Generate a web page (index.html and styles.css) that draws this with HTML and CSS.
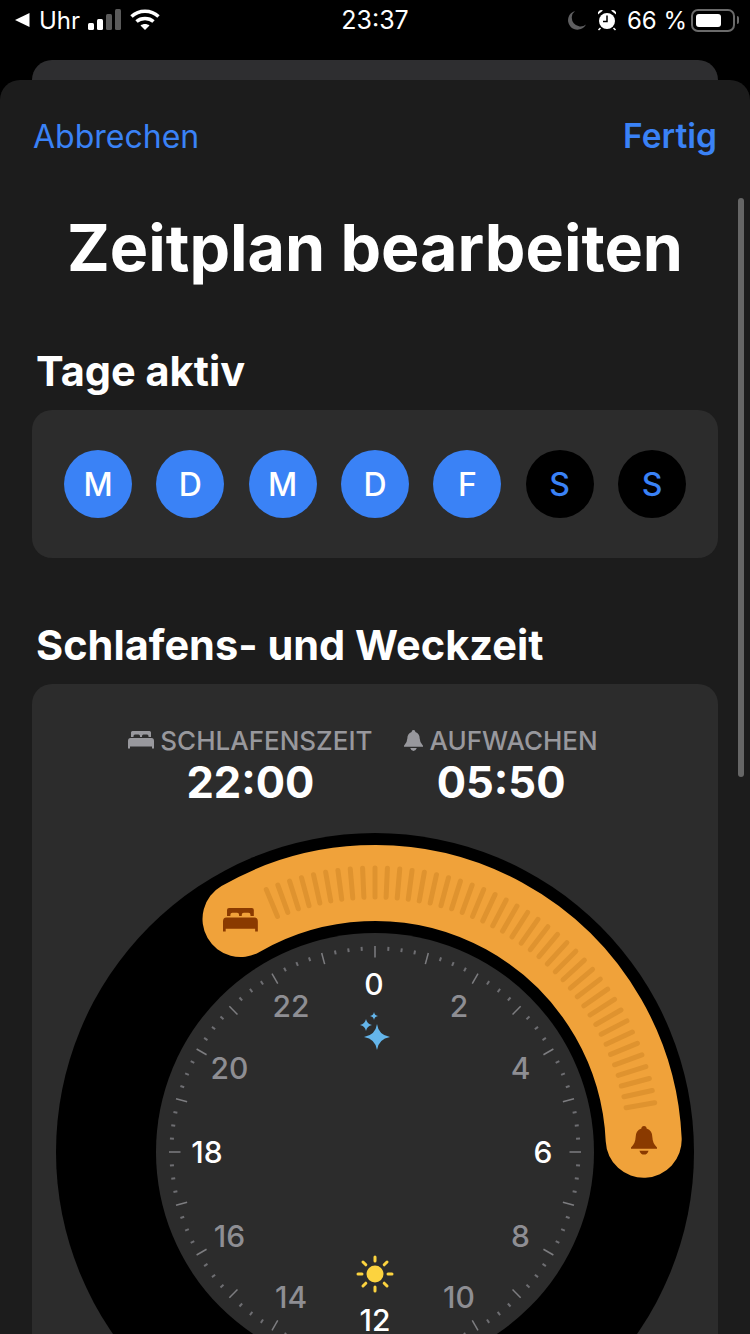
FILE: index.html
```html
<!DOCTYPE html>
<html lang="de">
<head>
    <meta charset="UTF-8">
    <meta name="viewport" content="width=device-width, initial-scale=1.0">
    <title>Zeitplan bearbeiten</title>
    <link rel="stylesheet" href="styles.css">
</head>
<body>
    <div class="screen">
        <div class="statusbar">
            <div class="status-left">
                <svg class="back-arrow" width="16" height="16" viewBox="0 0 16 16"><path d="M15.500 1V15L1 8Z"/></svg>
                <span>Uhr</span>
                <svg class="signal" width="34" height="22" viewBox="0 0 34 22">
                    <rect x="0" y="14" width="6" height="7" rx="1.500" fill="#fff"/>
                    <rect x="9" y="10" width="6" height="11" rx="1.500" fill="#fff"/>
                    <rect x="18" y="5" width="6" height="16" rx="1.500" fill="#5a5a5a"/>
                    <rect x="27" y="0" width="6" height="21" rx="1.500" fill="#5a5a5a"/>
                </svg>
                <svg class="wifi" width="30" height="22" viewBox="0 0 30 22">
                    <path d="M1.500 7.500C9 .5 21 .5 28.500 7.500" />
                    <path d="M6.500 12.500C11 8.500 19 8.500 23.500 12.500" />
                    <path class="wifi-dot" d="M10.500 16.500C13 14.500 17 14.500 19.500 16.500L15 21Z" />
                </svg>
            </div>
            <div class="status-time">23:37</div>
            <div class="status-right">
                <svg class="moon" width="20" height="20" viewBox="0 0 20 20"><path d="M8 1A9.500 9.500 0 1 0 19 14.500 8.500 8.500 0 0 1 8 1Z"/></svg>
                <svg class="alarm" width="20" height="22" viewBox="0 0 20 22">
                    <circle cx="10" cy="12" r="8" fill="#fff"/>
                    <path d="M10 6.500V12.500H6" fill="none" stroke="#000" stroke-width="1.500"/>
                    <path d="M1 5.500A3.500 3.500 0 0 1 6 1.500ZM19 5.500A3.500 3.500 0 0 0 14 1.500Z" fill="#fff"/>
                    <path d="M3.500 19L1.500 21M16.500 19L18.500 21" stroke="#fff" stroke-width="1.500"/>
                </svg>
                <span class="battery-text">66 %</span>
                <div class="battery"><div class="battery-level"></div></div>
                <div class="battery-cap"></div>
            </div>
        </div>

        <div class="back-card"></div>

        <div class="sheet">
            <div class="nav">
                <span class="nav-cancel">Abbrechen</span>
                <span class="nav-done">Fertig</span>
            </div>
            <h1>Zeitplan bearbeiten</h1>

            <h2 class="section-days">Tage aktiv</h2>
            <div class="card days">
                <div class="day on">M</div>
                <div class="day on">D</div>
                <div class="day on">M</div>
                <div class="day on">D</div>
                <div class="day on">F</div>
                <div class="day">S</div>
                <div class="day">S</div>
            </div>

            <h2 class="section-sleep">Schlafens- und Weckzeit</h2>
            <div class="card sleep">
                <div class="times">
                    <div class="time-col">
                        <div class="time-label">
                            <svg width="26" height="18" viewBox="0 0 26 18"><use href="#bed"/></svg>
                            SCHLAFENSZEIT
                        </div>
                        <div class="time-value">22:00</div>
                    </div>
                    <div class="time-col">
                        <div class="time-label">
                            <svg width="19" height="21" viewBox="0 0 20 22"><use href="#bell"/></svg>
                            AUFWACHEN
                        </div>
                        <div class="time-value">05:50</div>
                    </div>
                </div>

                <svg class="clock" id="clock" width="638" height="638" viewBox="-319 -319 638 638">
                    <defs>
                        <g id="bed" fill="currentColor">
                            <path d="M3 1.500Q3 0 4.500 0H21.500Q23 0 23 1.500V6H20.500V5Q20.500 3.500 19 3.500H15.500Q14 3.500 14 5V6H12V5Q12 3.500 10.500 3.500H7Q5.500 3.500 5.500 5V6H3Z"/>
                            <path d="M2.500 7H23.500Q26 7 26 10V17.500H24V15.500H2V17.500H0V10Q0 7 2.500 7Z"/>
                        </g>
                        <g id="bell" fill="currentColor">
                            <path d="M10 0Q12 0 12 2Q16.500 3.500 16.500 9Q16.500 13 20 16.500V17.500H0V16.500Q3.500 13 3.500 9Q3.500 3.500 8 2Q8 0 10 0Z"/>
                            <path d="M6.500 19H13.500Q12.500 22 10 22Q7.500 22 6.500 19Z"/>
                        </g>
                    </defs>
                    <circle r="319" fill="#000"/>
                    <circle r="219" fill="#2c2c2c"/>
                    <g id="dialTicks"></g>
                    <path d="M-134.500 -233A269 269 0 0 1 268.700 -12.200" fill="none" stroke="#f0a23a" stroke-width="76" stroke-linecap="round"/>
                    <g id="bandTicks"></g>
                    <use href="#bed" transform="translate(-152 -244) scale(1.340)" class="band-icon"/>
                    <use href="#bell" transform="translate(256 -26) scale(1.300)" class="band-icon"/>
                    <g id="hours" class="hours"></g>
                    <g fill="#64b5ea">
                        <path d="M2 -128Q3.500 -117 15 -115Q3.500 -113 2 -102Q.5 -113 -11 -115Q.5 -117 2 -128Z"/>
                        <path d="M-9 -133Q-8 -128 -3 -127Q-8 -126 -9 -121Q-10 -126 -15 -127Q-10 -128 -9 -133Z"/>
                        <path d="M-1 -140Q-.5 -136.500 3 -136Q-.5 -135.500 -1 -132Q-1.500 -135.500 -5 -136Q-1.500 -136.500 -1 -140Z"/>
                    </g>
                    <g class="sun">
                        <circle cy="122" r="8.500" fill="#fcd33f"/>
                        <g id="sunRays"></g>
                    </g>
                </svg>
            </div>
        </div>

        <div class="scroll-thumb"></div>
    </div>

    <script>
        const NS = "http://www.w3.org/2000/svg";

        function addLine(parent, angle, r1, r2, cls, cy) {
            const a = angle * Math.PI / 180;
            const line = document.createElementNS(NS, "line");
            line.setAttribute("x1", (Math.sin(a) * r1).toFixed(2));
            line.setAttribute("y1", ((cy || 0) - Math.cos(a) * r1).toFixed(2));
            line.setAttribute("x2", (Math.sin(a) * r2).toFixed(2));
            line.setAttribute("y2", ((cy || 0) - Math.cos(a) * r2).toFixed(2));
            line.setAttribute("class", cls);
            parent.appendChild(line);
        }

        // Skala: alle 15 Minuten ein Strich, jede Stunde ein langer
        const dial = document.getElementById("dialTicks");
        for (let i = 0; i < 96; i++) {
            if (i % 4 === 0) addLine(dial, i * 3.75, 206, 194.500, "tick-long");
            else addLine(dial, i * 3.75, 205.500, 201.500, "tick-short");
        }

        const band = document.getElementById("bandTicks");
        for (let deg = -22.5; deg <= 80; deg += 2.5) {
            addLine(band, deg, 284, 255, "band-tick");
        }

        // Stundenzahlen
        const hours = document.getElementById("hours");
        for (let h = 0; h < 24; h += 2) {
            const a = h * 15 * Math.PI / 180;
            const t = document.createElementNS(NS, "text");
            t.setAttribute("x", (Math.sin(a) * 168 - (h === 0 ? 1 : 0)).toFixed(1));
            t.setAttribute("y", (-Math.cos(a) * 168 + 10.5).toFixed(1));
            t.setAttribute("class", h % 6 === 0 ? "hour-main" : "hour-dim");
            t.textContent = h;
            hours.appendChild(t);
        }

        const rays = document.getElementById("sunRays");
        for (let i = 0; i < 8; i++) {
            addLine(rays, i * 45, 13, 17, "sun-ray", 122);
        }
    </script>
</body>
</html>
```

FILE: styles.css
```css
* {
    box-sizing: border-box;
}

html, body {
    margin: 0;
    padding: 0;
    background-color: #000;
}

body {
    font-family: 'Inter', 'Liberation Sans', sans-serif;
    color: #fff;
}

.screen {
    position: relative;
    width: 750px;
    height: 1334px;
    overflow: hidden;
    background-color: #000;
}

/* Statusleiste */
.statusbar {
    height: 60px;
    padding: 0 14px 20px;
    display: grid;
    grid-template-columns: 1fr auto 1fr;
    align-items: center;
    font-size: 24px;
}

.status-left {
    display: flex;
    align-items: center;
}

.back-arrow {
    fill: #fff;
}

.status-left span {
    margin-left: 9px;
}

.signal {
    margin-left: 8px;
}

.wifi {
    margin-left: 8px;
}

.wifi path {
    fill: none;
    stroke: #fff;
    stroke-width: 3.500;
}

.wifi .wifi-dot {
    fill: #fff;
    stroke: none;
}

.status-time {
    font-size: 25px;
}

.status-right {
    display: flex;
    align-items: center;
    justify-content: flex-end;
    margin-right: -3px;
}

.moon {
    fill: #5e5e60;
}

.alarm {
    margin-left: 10px;
}

.battery-text {
    margin-left: 10px;
}

.battery {
    width: 44px;
    height: 23px;
    margin-left: 4px;
    padding: 3px;
    border: 2px solid #6a6a6a;
    border-radius: 7px;
}

.battery-level {
    width: 25px;
    height: 100%;
    background-color: #fff;
    border-radius: 3px;
}

.battery-cap {
    width: 2px;
    height: 8px;
    margin-left: 2px;
    background-color: #6a6a6a;
    border-radius: 0 2px 2px 0;
}

.back-card {
    height: 20px;
    margin: 0 32px;
    background-color: #2e2e30;
    border-radius: 20px 20px 0 0;
}

/* Blatt */
.sheet {
    background-color: #1c1c1c;
    border-radius: 20px 20px 0 0;
    padding: 0 32px;
    height: 1254px;
}

.nav {
    display: flex;
    justify-content: space-between;
    align-items: center;
    height: 112px;
    padding: 0 1px;
    font-size: 32px;
    color: #3a82f6;
}

.nav-done {
    font-size: 33.500px;
    font-weight: 600;
}

h1 {
    margin: 16px 0 0;
    font-size: 64.500px;
    font-weight: 700;
    line-height: 80px;
    text-align: center;
}

h2 {
    margin: 0 0 0 4px;
    font-size: 41.500px;
    font-weight: 700;
    line-height: 50px;
}

.section-days {
    margin-top: 58px;
}

.section-sleep {
    margin-top: 62px;
}

.card {
    background-color: #2c2c2c;
    border-radius: 20px;
}

.days {
    display: flex;
    justify-content: space-between;
    height: 148px;
    margin-top: 14px;
    padding: 40px 32px;
}

.day {
    width: 68px;
    height: 68px;
    border-radius: 50%;
    background-color: #000;
    color: #3a82f6;
    display: flex;
    align-items: center;
    justify-content: center;
    font-size: 32px;
    font-weight: 500;
}

.day.on {
    background-color: #3a82f6;
    color: #fff;
}

.sleep {
    height: 800px;
    margin-top: 14px;
    padding-top: 41px;
    display: flex;
    flex-direction: column;
    align-items: center;
}

.times {
    display: flex;
    justify-content: center;
    gap: 32px;
    padding-right: 24px;
}

.time-col {
    display: flex;
    flex-direction: column;
    align-items: center;
}

.time-label {
    display: flex;
    align-items: center;
    gap: 6px;
    height: 30px;
    font-size: 26px;
    font-weight: 500;
    color: #98989d;
}

.time-value {
    font-size: 43.500px;
    font-weight: 700;
    line-height: 52px;
    margin-top: 1px;
}

.clock {
    flex: none;
    margin-top: 25px;
}

.tick-long {
    stroke: #7d7d80;
    stroke-width: 1.500;
}

.tick-short {
    stroke: #6e6e72;
    stroke-width: 2;
}

.band-tick {
    stroke: #df932f;
    stroke-width: 5;
    stroke-linecap: round;
}

.band-icon {
    color: #8a3a00;
}

.hours text {
    font-size: 30px;
    font-weight: 500;
    text-anchor: middle;
}

.hour-main {
    fill: #fff;
}

.hour-dim {
    fill: #8e8e93;
}

.sun-ray {
    stroke: #fcd33f;
    stroke-width: 3;
    stroke-linecap: round;
}

.scroll-thumb {
    position: absolute;
    top: 198px;
    right: 6px;
    width: 6px;
    height: 579px;
    background-color: #666;
    border-radius: 3px;
}
```
